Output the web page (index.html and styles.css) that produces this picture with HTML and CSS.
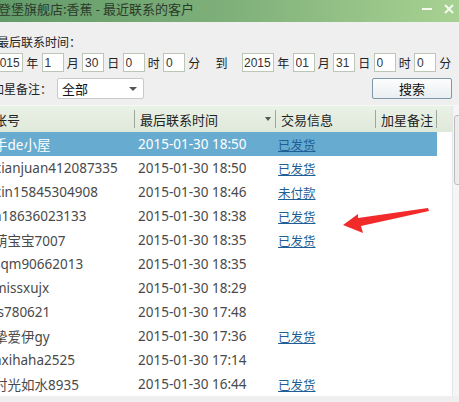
FILE: index.html
```html
<!DOCTYPE html>
<html lang="zh-CN">
<head>
    <meta charset="UTF-8">
    <title>最近联系的客户</title>
    <link rel="stylesheet" href="styles.css">
</head>
<body>
<div class="window">
    <div class="titlebar">
        <span class="title">登堡旗舰店:香蕉 - 最近联系的客户</span>
        <span class="controls">
            <svg width="12" height="10" viewBox="0 0 12 10"><rect x="1" y="5" width="10" height="2" fill="#f4f8ef"/></svg>
            <svg width="12" height="12" viewBox="0 0 12 12"><path d="M2 2 L10 10 M10 2 L2 10" stroke="#f4f8ef" stroke-width="2"/></svg>
        </span>
    </div>

    <div class="filters">
        <div class="label-row">最后联系时间：</div>
        <div class="date-row">
            <input class="field year" value="2015"><span class="unit">年</span>
            <input class="field" value="1"><span class="unit">月</span>
            <input class="field" value="30"><span class="unit">日</span>
            <input class="field" value="0"><span class="unit">时</span>
            <input class="field" value="0"><span class="unit">分</span>
            <span class="unit to">到</span>
            <input class="field year" value="2015"><span class="unit">年</span>
            <input class="field" value="01"><span class="unit">月</span>
            <input class="field" value="31"><span class="unit">日</span>
            <input class="field" value="0"><span class="unit">时</span>
            <input class="field" value="0"><span class="unit">分</span>
        </div>
        <div class="star-row">
            <span class="star-label">加星备注：</span>
            <div class="select">
                <span>全部</span>
                <span class="caret"></span>
            </div>
            <button class="search-btn">搜索</button>
        </div>
    </div>

    <div class="grid">
        <div class="list">
            <table>
                <colgroup>
                    <col class="c-name"><col class="c-time"><col class="c-trade"><col class="c-star"><col>
                </colgroup>
                <thead>
                    <tr>
                        <th class="first">帐号</th>
                        <th>最后联系时间<span class="sort"></span></th>
                        <th>交易信息</th>
                        <th>加星备注</th>
                        <th class="filler"></th>
                    </tr>
                </thead>
                <tbody>
                    <tr class="selected"><td class="first">手de小屋</td><td>2015-01-30 18:50</td><td><a href="#">已发货</a></td><td></td><td class="filler"></td></tr>
                    <tr><td class="first">xianjuan412087335</td><td>2015-01-30 18:50</td><td><a href="#">已发货</a></td><td></td><td class="filler"></td></tr>
                    <tr><td class="first">xin15845304908</td><td>2015-01-30 18:46</td><td><a href="#">未付款</a></td><td></td><td class="filler"></td></tr>
                    <tr><td class="first">a18636023133</td><td>2015-01-30 18:38</td><td><a href="#">已发货</a></td><td></td><td class="filler"></td></tr>
                    <tr><td class="first">萌宝宝7007</td><td>2015-01-30 18:35</td><td><a href="#">已发货</a></td><td></td><td class="filler"></td></tr>
                    <tr><td class="first">sqm90662013</td><td>2015-01-30 18:35</td><td></td><td></td><td class="filler"></td></tr>
                    <tr><td class="first">missxujx</td><td>2015-01-30 18:29</td><td></td><td></td><td class="filler"></td></tr>
                    <tr><td class="first">ls780621</td><td>2015-01-30 17:48</td><td></td><td></td><td class="filler"></td></tr>
                    <tr><td class="first">挚爱伊gy</td><td>2015-01-30 17:36</td><td><a href="#">已发货</a></td><td></td><td class="filler"></td></tr>
                    <tr><td class="first">axihaha2525</td><td>2015-01-30 17:14</td><td></td><td></td><td class="filler"></td></tr>
                    <tr><td class="first">时光如水8935</td><td>2015-01-30 16:44</td><td><a href="#">已发货</a></td><td></td><td class="filler"></td></tr>
                </tbody>
            </table>
        </div>
        <div class="scrollbar"><div class="thumb"></div></div>
    </div>

    <!-- red pointer drawn over the list -->
    <svg class="pointer" width="100" height="40" viewBox="340 200 100 40">
        <polygon points="343,225 358,214 358,218 428,208 429,211 361,226 363,233" fill="#f22a2a"/>
    </svg>
</div>
</body>
</html>
```

FILE: styles.css
```css
body {
    margin: 0;
    overflow: hidden;
    background: #fff;
    font-family: "Noto Sans", "Noto Sans CJK SC", sans-serif;
}
.window {
    position: relative;
    width: 479px;
    margin-left: -10px;
    background: #efefef;
    height: 402px;
}
.titlebar {
    height: 22px;
    display: flex;
    justify-content: space-between;
    background: linear-gradient(to right, #619a69, #7fb07a 50%, #a9d393);
    padding-left: 8px;
    padding-right: 14px;
}
.title {
    font-family: "Noto Sans CJK SC", sans-serif;
    font-size: 13px;
    line-height: 18px;
    color: #2c3a2c;
}
.controls {
    display: flex;
    gap: 10px;
    padding-top: 3px;
}
.filters {
    padding-top: 12px;
}
.label-row {
    padding-left: 7px;
    height: 16px;
    line-height: 16px;
    font-family: "Noto Sans CJK SC", sans-serif;
    font-size: 12px;
    color: #222;
}
.date-row {
    display: flex;
    align-items: center;
    margin-top: 3px;
    padding-left: 1px;
    height: 19px;
}
.field {
    box-sizing: border-box;
    width: 22px;
    height: 19px;
    margin: 0;
    padding: 0 2px;
    border: 1px solid #bcc6b6;
    background: #fff;
    font-family: "Liberation Sans", sans-serif;
    font-size: 12px;
    color: #333;
    outline: none;
}
.field.year {
    width: 32px;
    padding: 0 1px;
}
.unit {
    width: 18.5px;
    text-align: center;
    font-family: "Noto Sans CJK SC", sans-serif;
    font-size: 12px;
    color: #222;
}
.unit.to {
    width: 38.5px;
    text-align: left;
    padding-left: 12px;
    box-sizing: border-box;
}
.star-row {
    display: flex;
    align-items: center;
    margin-top: 6px;
    padding-left: 2px;
    padding-right: 17px;
    height: 21px;
}
.star-label {
    width: 65px;
    font-family: "Noto Sans CJK SC", sans-serif;
    font-size: 12px;
    color: #222;
}
.select {
    box-sizing: border-box;
    width: 87px;
    height: 21px;
    border: 1px solid #c9c9c9;
    border-radius: 2px;
    background: #fff;
    display: flex;
    align-items: center;
    justify-content: space-between;
    padding: 0 6px 0 4px;
    font-family: "Noto Sans CJK SC", sans-serif;
    font-size: 13px;
    color: #111;
}
.caret {
    width: 0;
    height: 0;
    border-left: 4px solid transparent;
    border-right: 4px solid transparent;
    border-top: 4px solid #555;
}
.search-btn {
    margin-left: auto;
    width: 80px;
    height: 21px;
    border: 1px solid #7d97ab;
    border-radius: 2px;
    background: linear-gradient(#fdfdfd, #e9eef1);
    font-family: "Noto Sans CJK SC", sans-serif;
    font-size: 13px;
    color: #111;
    padding: 0;
}
.grid {
    display: flex;
    margin-top: 6px;
    background: #fff;
    border-top: 1px solid #f8f8f8;
}
.list {
    flex: 1;
}
table {
    width: 100%;
    border-collapse: collapse;
    table-layout: fixed;
}
.c-name { width: 145px; }
.c-time { width: 141px; }
.c-trade { width: 100px; }
.c-star { width: 61px; }
th {
    position: relative;
    height: 26px;
    padding: 0 0 0 5px;
    text-align: left;
    font-weight: normal;
    font-family: "Noto Sans CJK SC", sans-serif;
    font-size: 13px;
    color: #222;
    background: linear-gradient(#eaf1e6, #dfe9da);
    white-space: nowrap;
}
th::after {
    content: "";
    position: absolute;
    right: 0;
    top: 4px;
    bottom: 4px;
    width: 1px;
    background: #9ea89a;
}
th.filler::after {
    display: none;
}
th.first,
td.first {
    padding-left: 4px;
}
.sort {
    position: absolute;
    right: 5px;
    top: 11px;
    border-left: 3px solid transparent;
    border-right: 3px solid transparent;
    border-top: 4px solid #555;
}
td {
    height: 24px;
    padding: 0 0 0 3px;
    font-size: 13.5px;
    color: #4a4a4a;
    white-space: nowrap;
    overflow: hidden;
}
td:nth-child(3) {
    padding-left: 2px;
}
.selected td {
    background: #67acd0;
    color: #fff;
}
.selected td.filler {
    background: #fff;
}
td a {
    font-family: "Noto Sans CJK SC", sans-serif;
    font-size: 12.5px;
    color: #1f5f96;
    text-decoration: underline;
}
.scrollbar {
    position: relative;
    width: 16px;
    background: #f5f5f5;
    border-left: 1px solid #e6e6e6;
}
.thumb {
    position: absolute;
    left: 1px;
    top: 9px;
    width: 12px;
    height: 68px;
    border: 1px solid #bdbdbd;
    border-radius: 3px;
    background: #ececec;
}
.pointer {
    position: absolute;
    left: 350px;
    top: 200px;
}
```
